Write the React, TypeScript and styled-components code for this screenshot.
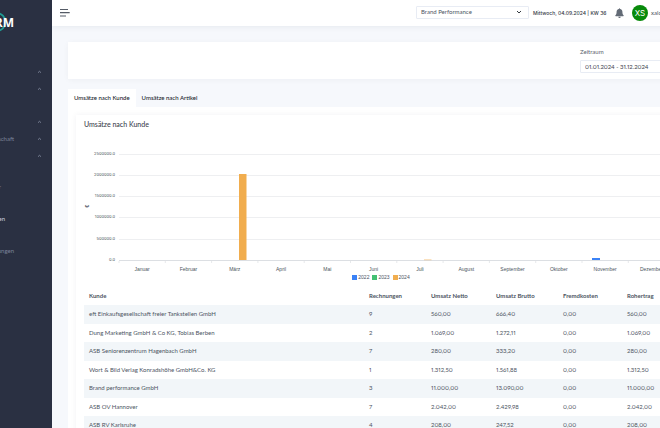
import React from 'react';
import styled, { createGlobalStyle } from 'styled-components';

const Global = createGlobalStyle`
  *, *::before, *::after { box-sizing: border-box; }
  body {
    margin: 0;
    background: #f6f8fc;
    color: #4c545f;
    font: 6px/10px Lato, sans-serif;
    font-variant-numeric: lining-nums proportional-nums;
    overflow: hidden;
  }
  button, input, select { font: inherit; font-variant-numeric: inherit; color: inherit; }
`;

const Shell = styled.div`
  display: flex;
  height: 100vh;
  overflow: hidden;
`;

const Sidebar = styled.aside`
  flex: 0 0 52px;
  background: #2a3042;
  color: #7b849b;
  overflow: hidden;
`;

const Logo = styled.svg`
  display: block;
  width: 52px;
  height: 46px;
  margin-bottom: 17px;
`;

const NavGroup = styled.ul<{ $gap: number }>`
  list-style: none;
  margin: 0 0 ${(p) => p.$gap}px;
  padding: 0;
`;

const NavButton = styled.button`
  display: flex;
  align-items: center;
  justify-content: space-between;
  width: 100%;
  height: 17px;
  padding: 0 10px 0 0;
  border: 0;
  background: none;
`;

const NavLink = styled.a<{ $active?: boolean }>`
  display: flex;
  align-items: center;
  height: 32px;
  color: ${(p) => (p.$active ? '#d3d8e6' : 'inherit')};
  text-decoration: none;
`;

const NavText = styled.span<{ $width: number }>`
  display: flex;
  justify-content: flex-end;
  width: ${(p) => p.$width}px;
`;

const Main = styled.main`
  flex: 1;
  min-width: 0;
  overflow: hidden;
`;

const Header = styled.header`
  display: flex;
  align-items: center;
  height: 26px;
  margin-right: -12px;
  padding-left: 8px;
  background: #fff;
  box-shadow: 0 1px 6px rgba(18, 38, 63, 0.07);
`;

const IconButton = styled.button`
  display: flex;
  padding: 0;
  border: 0;
  background: none;
`;

const HeaderTools = styled.div`
  display: flex;
  align-items: center;
  margin-left: auto;
  white-space: nowrap;
`;

const SelectWrap = styled.label`
  display: grid;
  grid-template-columns: 1fr 12px;
  align-items: center;
  width: 113px;
  height: 13px;
  margin: 0 4px 2px 0;
  border: 1px solid #e8ecf4;
  border-radius: 1px;
`;

const Select = styled.select`
  grid-area: 1 / 1 / 2 / 3;
  height: 11px;
  padding: 0 4px;
  border: 0;
  background: transparent;
  appearance: none;
`;

const SelectArrow = styled.svg`
  grid-area: 1 / 2;
  width: 6px;
  height: 6px;
  pointer-events: none;
`;

const Today = styled.span`
  width: 82px;
  color: #343a46;
  font-family: Inter, sans-serif;
  font-size: 5px;
  font-weight: 500;
`;

const Avatar = styled.span`
  display: grid;
  place-items: center;
  width: 16px;
  height: 16px;
  margin: 0 3px 0 8px;
  border-radius: 50%;
  background: #088a0b;
  color: #fff;
  font-family: Inter, sans-serif;
  font-size: 8px;
`;

const UserName = styled.span`
  width: 21px;
`;

const Content = styled.div`
  margin-right: -32px;
  padding: 16px 0 0 16px;
`;

const FilterCard = styled.section`
  display: flex;
  justify-content: flex-end;
  height: 37px;
  margin-bottom: 10px;
  padding: 5px 8px 0 0;
  background: #fff;
  box-shadow: 0 1px 6px rgba(18, 38, 63, 0.04);
`;

const Field = styled.label`
  display: flex;
  flex-direction: column;
  gap: 3px;
  width: 104px;
  color: #5a626e;
`;

const DateInput = styled.input`
  width: 100%;
  height: 13px;
  padding: 0 4px 1px;
  border: 1px solid #e8ecf4;
  border-radius: 1px;
  background: #fff;
  color: #3c424d;
`;

const Tabs = styled.div`
  display: flex;
`;

const Tab = styled.button<{ $active?: boolean }>`
  height: 18px;
  padding: 0 6px 1px;
  border: 0;
  background: ${(p) => (p.$active ? '#fff' : 'transparent')};
  color: #20242c;
  font-weight: 500;
`;

const Pane = styled.div`
  padding: 8px 0 0 8px;
  background: #fff;
`;

const ReportCard = styled.section`
  padding: 4px 8px 0;
  background: #fff;
  box-shadow: 0 0 6px rgba(18, 38, 63, 0.06);
`;

const Title = styled.h1`
  margin: 0 0 15px;
  font-size: 7px;
  line-height: 10px;
  font-weight: 500;
  color: #3c424d;
`;

const Chart = styled.svg`
  display: block;
  width: 100%;
  font-family: 'Liberation Sans', sans-serif;
  font-size: 5px;
  fill: #4c5560;
`;

const AxisValue = styled.text`
  font-family: Inter, sans-serif;
  font-size: 4px;
  text-anchor: end;
`;

const Legend = styled.ul`
  display: flex;
  justify-content: center;
  gap: 3px;
  margin: 0 0 6px;
  padding: 0 6px 0 0;
  list-style: none;
  font: 5px/8px 'Liberation Sans', sans-serif;
`;

const LegendItem = styled.li<{ $color: string }>`
  display: flex;
  align-items: center;
  gap: 1px;
  &::before {
    content: '';
    width: 5px;
    height: 5px;
    background: ${(p) => p.$color};
  }
`;

const Table = styled.table`
  width: 100%;
  table-layout: fixed;
  border-collapse: collapse;
`;

const Col = styled.col<{ $width?: number }>`
  width: ${(p) => (p.$width ? `${p.$width}px` : 'auto')};
`;

const Th = styled.th`
  height: 18px;
  padding: 0 5px;
  text-align: left;
  font-weight: 700;
  white-space: nowrap;
`;

const Row = styled.tr`
  height: 18px;
  &:nth-child(odd) { height: 19px; background: #f2f6f9; }
`;

const Td = styled.td`
  padding: 0 5px 1px;
  white-space: nowrap;
`;

const months = ['Januar', 'Februar', 'März', 'April', 'Mai', 'Juni', 'Juli', 'August', 'September', 'Oktober', 'November', 'Dezember'];
const ticks = ['2500000.0', '2000000.0', '1500000.0', '1000000.0', '500000.0', '0.0'];
const tickY = [10, 31, 52, 73, 95, 116];
const series = [
  { year: '2022', color: '#3b82f6' },
  { year: '2023', color: '#43c073' },
  { year: '2024', color: '#f1ad4e' },
];
const headings = ['Kunde', 'Rechnungen', 'Umsatz Netto', 'Umsatz Brutto', 'Fremdkosten', 'Rohertrag'];
const rows = [
  ['eft Einkaufsgesellschaft freier Tankstellen GmbH', '9', '560,00', '666,40', '0,00', '560,00'],
  ['Dung Marketing GmbH & Co KG, Tobias Berben', '2', '1.069,00', '1.272,11', '0,00', '1.069,00'],
  ['ASB Seniorenzentrum Hagenbach GmbH', '7', '280,00', '333,20', '0,00', '280,00'],
  ['Wort & Bild Verlag Konradshöhe GmbH&Co. KG', '1', '1.312,50', '1.561,88', '0,00', '1.312,50'],
  ['Brand performance GmbH', '3', '11.000,00', '13.090,00', '0,00', '11.000,00'],
  ['ASB OV Hannover', '7', '2.042,00', '2.429,98', '0,00', '2.042,00'],
  ['ASB RV Karlsruhe', '4', '208,00', '247,52', '0,00', '208,00'],
];

function NavItem({ label }: { label: string }) {
  return (
    <li>
      <NavButton aria-label={label || 'Menü'}>
        <NavText $width={14}>{label}</NavText>
        <svg width="5" height="4" viewBox="0 0 5 4" fill="none" stroke="#8d95aa" strokeWidth="0.8">
          <path d="M1 2.7 2.5 1.3 4 2.7" />
        </svg>
      </NavButton>
    </li>
  );
}

function SalesChart() {
  const left = 35;
  const step = 46.3;
  return (
    <Chart viewBox="0 0 600 129" role="img" aria-label="Umsätze nach Kunde">
      {ticks.map((t, i) => (
        <g key={t}>
          <AxisValue x="31" y={tickY[i] + 1}>{t}</AxisValue>
          <path d={`M${left} ${tickY[i] + 0.5}H591`} stroke={i === 5 ? '#dcdfe3' : '#eeeff1'} />
        </g>
      ))}
      <text transform="translate(5 62) rotate(-90)" textAnchor="middle" fontWeight="700">€</text>
      {months.map((m, i) => (
        <g key={m}>
          <path d={`M${left + i * step} 117v2`} stroke="#dcdfe3" strokeWidth="0.7" />
          <text x={left + (i + 0.5) * step} y="127" textAnchor="middle">{m}</text>
        </g>
      ))}
      <rect x="155" y="30" width="7.5" height="86" fill="#f1ad4e" />
      <rect x="340" y="115.4" width="7.5" height="0.8" fill="#f1ad4e" opacity="0.6" />
      <rect x="508" y="114" width="8" height="2" fill="#3b82f6" />
    </Chart>
  );
}

export default function App() {
  return (
    <Shell>
      <Global />
      <Sidebar>
        <Logo viewBox="0 0 52 46" role="img" aria-label="CRM">
          <circle cx="-3.5" cy="22" r="9" fill="none" stroke="#1f9d94" strokeWidth="1.8" />
          <text x="14" y="27" textAnchor="end" fill="#fff" fontFamily="Open Sans, sans-serif" fontWeight="700" fontSize="12">RM</text>
        </Logo>
        <NavGroup $gap={16}>
          <NavItem label="" />
          <NavItem label="" />
        </NavGroup>
        <NavGroup $gap={7}>
          <NavItem label="" />
          <NavItem label="schaft" />
          <NavItem label="" />
        </NavGroup>
        <NavGroup $gap={0}>
          <li><NavLink href="#"><NavText $width={1}>r</NavText></NavLink></li>
          <li><NavLink href="#" $active><NavText $width={5}>en</NavText></NavLink></li>
          <li><NavLink href="#"><NavText $width={14}>ungen</NavText></NavLink></li>
        </NavGroup>
      </Sidebar>
      <Main>
        <Header>
          <IconButton aria-label="Menü öffnen">
            <svg width="10" height="10" viewBox="0 0 10 10" stroke="#555b66" strokeWidth="1.2">
              <path d="M0 1.5H8M0 4.7H9.7M0 8H6" />
            </svg>
          </IconButton>
          <HeaderTools>
            <SelectWrap>
              <Select aria-label="Mandant"><option>Brand Performance</option></Select>
              <SelectArrow viewBox="0 0 6 6" fill="none" stroke="#343a40" strokeWidth="1">
                <path d="M1 2 3 4 5 2" />
              </SelectArrow>
            </SelectWrap>
            <Today>Mittwoch, 04.09.2024 | KW 36</Today>
            <IconButton aria-label="Benachrichtigungen">
              <svg width="9" height="10" viewBox="0 0 9 10" fill="#636b76">
                <path d="M4.5 0.2c.4 0 .6.3.6.7 1.4.3 2.3 1.4 2.3 2.9 0 2 .4 2.7 1.2 3.5.3.4.1.9-.4.9H.8c-.5 0-.7-.5-.4-.9.8-.8 1.2-1.5 1.2-3.5 0-1.5.9-2.6 2.3-2.9 0-.4.2-.7.6-.7zM3.3 8.7h2.4a1.2 1.2 0 0 1-2.4 0z" />
              </svg>
            </IconButton>
            <Avatar>XS</Avatar>
            <UserName>xalora</UserName>
          </HeaderTools>
        </Header>
        <Content>
          <FilterCard>
            <Field>
              Zeitraum
              <DateInput defaultValue="01.01.2024 - 31.12.2024" />
            </Field>
          </FilterCard>
          <Tabs role="tablist">
            <Tab role="tab" aria-selected="true" $active>Umsätze nach Kunde</Tab>
            <Tab role="tab" aria-selected="false">Umsätze nach Artikel</Tab>
          </Tabs>
          <Pane>
            <ReportCard>
              <Title>Umsätze nach Kunde</Title>
              <SalesChart />
              <Legend>
                {series.map((s) => <LegendItem key={s.year} $color={s.color}>{s.year}</LegendItem>)}
              </Legend>
              <Table>
                <colgroup>
                  <Col $width={280} /><Col $width={62} /><Col $width={65} />
                  <Col $width={67} /><Col $width={64} /><Col />
                </colgroup>
                <thead><tr>{headings.map((h) => <Th key={h}>{h}</Th>)}</tr></thead>
                <tbody>
                  {rows.map((r) => <Row key={r[0]}>{r.map((c, i) => <Td key={i}>{c}</Td>)}</Row>)}
                </tbody>
              </Table>
            </ReportCard>
          </Pane>
        </Content>
      </Main>
    </Shell>
  );
}
